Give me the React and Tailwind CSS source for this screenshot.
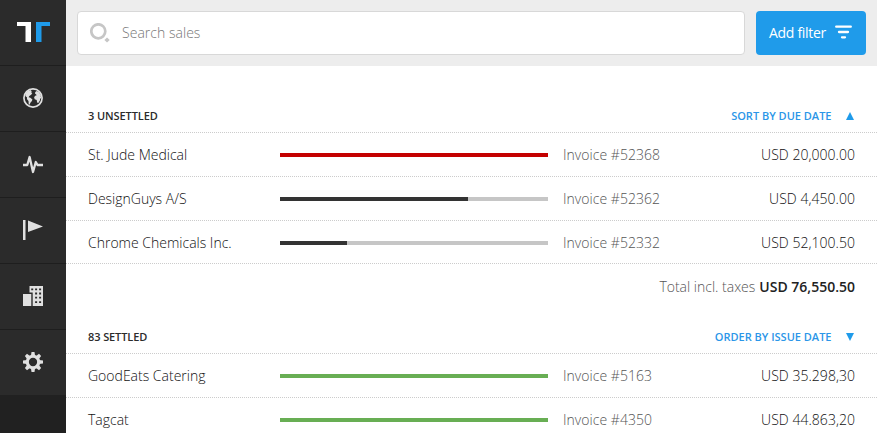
import React from "react";

function Logo() {
  return (
    <svg width="33" height="20" viewBox="0 0 33 20">
      <path fill="#fff" d="M0 0h14v20H8.500V4H0z" />
      <path fill="#1f9bea" d="M19 0h14v4h-8.500v16H19z" />
    </svg>
  );
}

function GlobeIcon() {
  return (
    <svg width="20" height="20" viewBox="0 0 20 20">
      <circle cx="10" cy="10" r="9.100" fill="none" stroke="#e0e0e0" strokeWidth="1.700" />
      <path
        fill="#e0e0e0"
        d="M2.500 5.500 5 3l2.500-1 1.300 1.200L8 4.200l1.300.9L8.200 6.700 6.300 7.900 5.600 9.300l1.800.5 2 1.600-.5 1.700-1.500 1.700-.7 2-1-.9-.2-3-1.600-1.800.2-1.500L2.300 8z"
      />
      <path
        fill="#e0e0e0"
        d="m12 5.600.3-1.500 1.400-1.100 2 .9 2.300 3-.3 1.300.6 1.700-1.200.8-.2 1.700-1.600 2.600-1.200-.4-.4-2.700-2-.7-.6-1.900 1.100-1.600 1.500-.4-.5-.9z"
      />
    </svg>
  );
}

function PulseIcon() {
  return (
    <svg width="20" height="20" viewBox="0 0 20 20">
      <path
        d="M0 11h4.300L6.600 3 10 18l2.800-10 1.700 3H20"
        fill="none"
        stroke="#e0e0e0"
        strokeWidth="2.300"
        strokeLinejoin="round"
      />
    </svg>
  );
}

function FlagIcon() {
  return (
    <svg width="20" height="20" viewBox="0 0 20 20" fill="#e0e0e0">
      <path d="M0 0h2.500v20H0zM5 .5 20 6.500 5 12z" />
    </svg>
  );
}

function BuildingsIcon() {
  return (
    <svg width="20" height="20" viewBox="0 0 20 20">
      <path fill="#e0e0e0" d="M6.500 0H20v20H9.700V6.500H6.500z" />
      <path fill="#e0e0e0" d="M0 8h8.300v12H0z" />
      <path
        fill="#2b2b2b"
        d="M8.200 2.500h2v1.800h-2zM12.100 2.500h2v1.800h-2zM16.100 2.500h2v1.800h-2zM12.100 6.600h2v1.800h-2zM16.100 6.600h2v1.800h-2zM12.100 10.700h2v1.800h-2zM16.100 10.700h2v1.800h-2zM12.100 15.200h2V17h-2zM16.100 15.200h2V17h-2z"
      />
    </svg>
  );
}

function GearIcon() {
  const teeth = [0, 45, 90, 135, 180, 225, 270, 315];
  return (
    <svg width="20" height="20" viewBox="0 0 20 20">
      <circle cx="10" cy="10" r="5.700" fill="none" stroke="#e0e0e0" strokeWidth="3.100" />
      {teeth.map((a) => (
        <path key={a} fill="#e0e0e0" d="M7.900 4 8.500 0h3l.6 4z" transform={`rotate(${a} 10 10)`} />
      ))}
    </svg>
  );
}

function SearchIcon() {
  return (
    <svg width="20" height="20" viewBox="0 0 20 20">
      <circle cx="8.300" cy="8.300" r="7" fill="none" stroke="#c6c6c6" strokeWidth="2.700" />
      <path fill="#c6c6c6" d="m17 14.400 2.700 2.600-2.700 2.600-2.600-2.600z" />
    </svg>
  );
}

const navIcons = [GlobeIcon, PulseIcon, FlagIcon, BuildingsIcon, GearIcon];

const unsettled = [
  { name: "St. Jude Medical", invoice: "52368", amount: "20,000.00", color: "bg-[#c40000]", paid: 100 },
  { name: "DesignGuys A/S", invoice: "52362", amount: "4,450.00", color: "bg-[#333]", paid: 70 },
  { name: "Chrome Chemicals Inc.", invoice: "52332", amount: "52,100.50", color: "bg-[#333]", paid: 25 },
];

const settled = [
  { name: "GoodEats Catering", invoice: "5163", amount: "35.298,30", color: "bg-[#68ae54]", paid: 100 },
  { name: "Tagcat", invoice: "4350", amount: "44.863,20", color: "bg-[#68ae54]", paid: 100 },
];

function SectionHeader({ title, sort, up, className }) {
  return (
    <div
      className={`flex shrink-0 items-end justify-between pr-[22px] pl-[22px] text-[11px] leading-[15px] font-semibold ${className}`}
    >
      <h2 className="tracking-[-0.1px] text-[#2b2b2b]">{title}</h2>
      <button className="flex items-center text-[#2b96e8]">
        <span>{sort}</span>
        <svg className="mr-[1.5px] ml-[14px]" width="8" height="8" viewBox="0 0 8 8" fill="#1f9bea">
          <path d={up ? "M4 0l4 8H0z" : "M4 8l4-8H0z"} />
        </svg>
      </button>
    </div>
  );
}

function SaleRow({ sale }) {
  return (
    <div className="flex h-11 shrink-0 items-center border-t border-dotted border-[#ccc] px-[22px]">
      <div className="w-48">{sale.name}</div>
      <div className="h-1 w-[268px] bg-[#c6c6c6]">
        <div className={`h-full ${sale.color}`} style={{ width: `${sale.paid}%` }} />
      </div>
      <div className="ml-[15px] tracking-[0.03px] text-[#555]">Invoice #{sale.invoice}</div>
      <div className="ml-auto tracking-[0.03px]">USD {sale.amount}</div>
    </div>
  );
}

export default function App() {
  return (
    <div className="flex h-[433px] w-[877px] overflow-hidden bg-white font-['Open_Sans',sans-serif] text-sm font-light text-[#111]">
      <nav className="w-[66px] shrink-0 bg-[#212121]">
        <div className="flex h-[66px] items-center justify-center border-b border-[#1e1e1e] bg-[#2b2b2b] pb-px">
          <Logo />
        </div>
        {navIcons.map((Icon, i) => (
          <a
            key={i}
            className="flex h-[66px] items-center justify-center border-b border-[#1e1e1e] bg-[#2b2b2b] pb-px last:h-[65px] last:border-b-0"
          >
            <Icon />
          </a>
        ))}
      </nav>
      <main className="flex min-w-0 flex-1 flex-col">
        <header className="flex h-[66px] shrink-0 items-start gap-[11px] bg-[#ededed] px-[11px] pt-[11px]">
          <div className="flex h-11 flex-1 items-center rounded border border-[#d8d8d8] bg-white pl-3">
            <SearchIcon />
            <span className="ml-3 tracking-[0.03px] text-[#777]">Search sales</span>
          </div>
          <button className="flex h-11 w-[110px] items-center rounded bg-[#1f9bea] pl-[13px] font-normal text-white">
            <span className="w-[57px] tracking-[-0.3px] whitespace-nowrap">Add filter</span>
            <svg className="-mt-0.5 ml-[9px]" width="17" height="14" viewBox="0 0 17 14" fill="none" stroke="#fff" strokeWidth="2.300" strokeLinecap="round">
              <path d="M1.200 1.700h14.600M4 7h9M7 12.300h3" />
            </svg>
          </button>
        </header>
        <SectionHeader title="3 UNSETTLED" sort="SORT BY DUE DATE" up className="h-[66px] pb-[9px]" />
        {unsettled.map((s) => (
          <SaleRow key={s.invoice} sale={s} />
        ))}
        <div className="-mt-px flex h-[47px] shrink-0 items-center justify-end border-t border-dotted border-[#ccc] px-[22px]">
          <span className="text-[#555]">Total incl. taxes</span>
          <strong className="ml-1 font-semibold text-[#222]">USD 76,550.50</strong>
        </div>
        <SectionHeader title="83 SETTLED" sort="ORDER BY ISSUE DATE" className="h-[43px] pb-[9px]" />
        {settled.map((s) => (
          <SaleRow key={s.invoice} sale={s} />
        ))}
      </main>
    </div>
  );
}
